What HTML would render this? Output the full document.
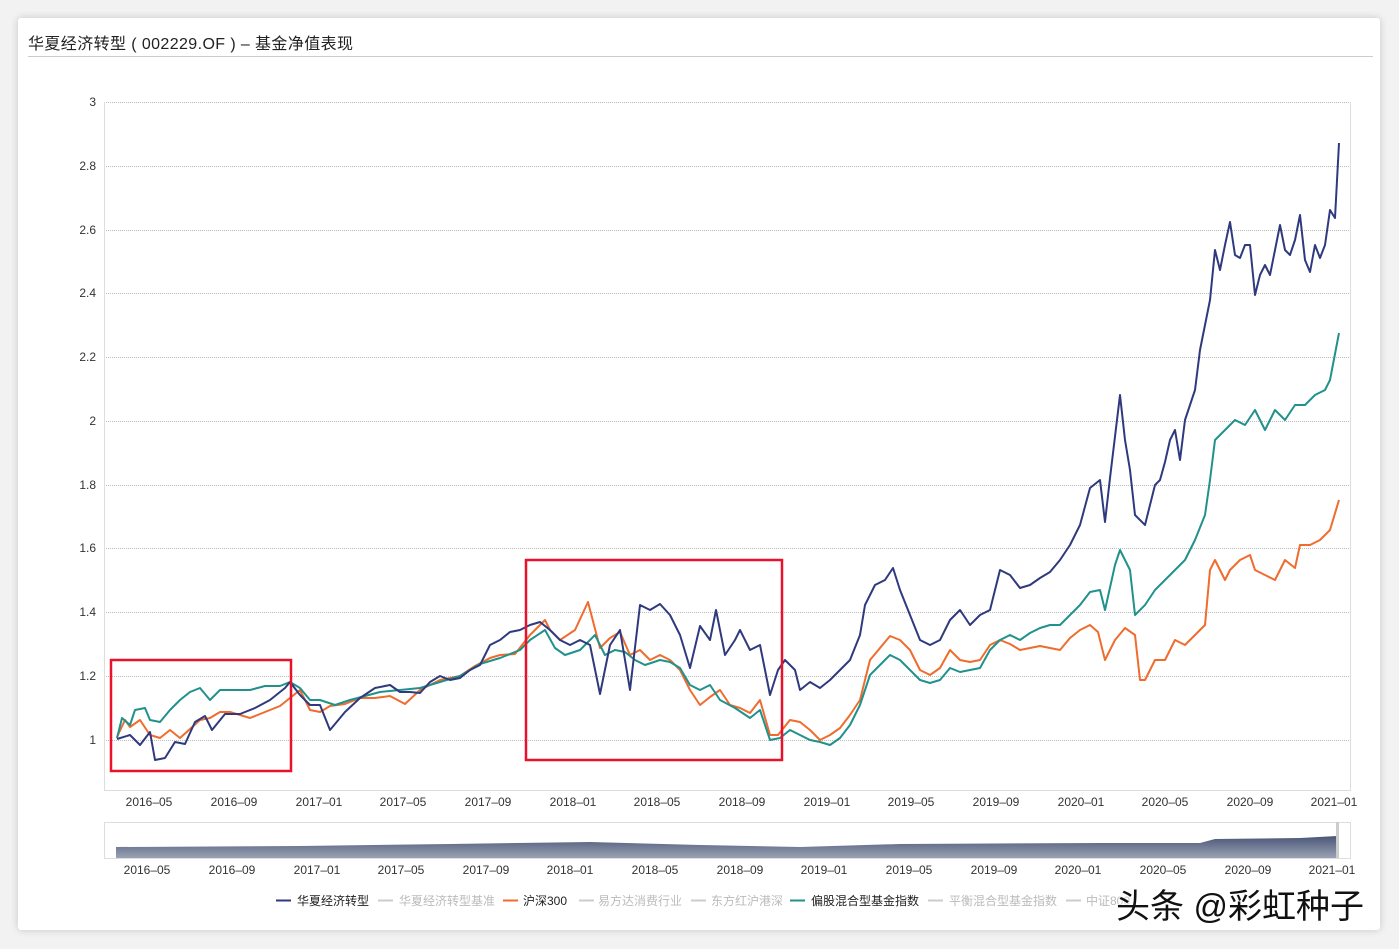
<!DOCTYPE html>
<html><head><meta charset="utf-8"><style>
html,body{margin:0;padding:0;width:1399px;height:949px;background:#f2f2f2;overflow:hidden;font-family:"Liberation Sans","Noto Sans CJK SC",sans-serif}
.card{position:absolute;left:18px;top:18px;width:1362px;height:912px;background:#fff;box-shadow:0 0 8px rgba(0,0,0,.18);border-radius:3px}
.title{position:absolute;left:28px;top:30px;font-size:16px;letter-spacing:0.4px;color:#222}
.line{position:absolute;left:28px;top:56px;width:1345px;height:1px;background:#ccc}
svg{position:absolute;left:0;top:0}
.wm{position:absolute;left:1116px;top:879px;font-size:34px;color:#111;text-shadow:0 0 3px #fff,0 0 3px #fff}
</style></head><body>
<div class="card"></div>
<div class="title">华夏经济转型 ( 002229.OF ) – 基金净值表现</div>
<div class="line"></div>
<svg width="1399" height="949" font-family="Liberation Sans, Noto Sans CJK SC, sans-serif">
<g stroke="#bbb" stroke-dasharray="1,1" stroke-width="1">
<line x1="104" y1="102.5" x2="1350" y2="102.5"/><line x1="104" y1="166.5" x2="1350" y2="166.5"/>
<line x1="104" y1="230.5" x2="1350" y2="230.5"/><line x1="104" y1="293.5" x2="1350" y2="293.5"/>
<line x1="104" y1="357.5" x2="1350" y2="357.5"/><line x1="104" y1="421.5" x2="1350" y2="421.5"/>
<line x1="104" y1="485.5" x2="1350" y2="485.5"/><line x1="104" y1="548.5" x2="1350" y2="548.5"/>
<line x1="104" y1="612.5" x2="1350" y2="612.5"/><line x1="104" y1="676.5" x2="1350" y2="676.5"/>
<line x1="104" y1="740.5" x2="1350" y2="740.5"/>
</g>
<g stroke="#ddd" fill="none"><line x1="104.5" y1="102" x2="104.5" y2="791"/><line x1="1350.5" y1="102" x2="1350.5" y2="791"/><line x1="104" y1="790.5" x2="1350" y2="790.5"/></g>
<g font-size="12" fill="#333" text-anchor="end">
<text x="96" y="106">3</text><text x="96" y="170">2.8</text><text x="96" y="234">2.6</text><text x="96" y="297">2.4</text><text x="96" y="361">2.2</text><text x="96" y="425">2</text><text x="96" y="489">1.8</text><text x="96" y="552">1.6</text><text x="96" y="616">1.4</text><text x="96" y="680">1.2</text><text x="96" y="744">1</text>
</g>
<g font-size="12" fill="#333" text-anchor="middle">
<text x="149" y="806">2016–05</text><text x="234" y="806">2016–09</text><text x="319" y="806">2017–01</text><text x="403" y="806">2017–05</text><text x="488" y="806">2017–09</text><text x="573" y="806">2018–01</text><text x="657" y="806">2018–05</text><text x="742" y="806">2018–09</text><text x="827" y="806">2019–01</text><text x="911" y="806">2019–05</text><text x="996" y="806">2019–09</text><text x="1081" y="806">2020–01</text><text x="1165" y="806">2020–05</text><text x="1250" y="806">2020–09</text><text x="1334" y="806">2021–01</text>
<text x="147" y="874">2016–05</text><text x="232" y="874">2016–09</text><text x="317" y="874">2017–01</text><text x="401" y="874">2017–05</text><text x="486" y="874">2017–09</text><text x="570" y="874">2018–01</text><text x="655" y="874">2018–05</text><text x="740" y="874">2018–09</text><text x="824" y="874">2019–01</text><text x="909" y="874">2019–05</text><text x="994" y="874">2019–09</text><text x="1078" y="874">2020–01</text><text x="1163" y="874">2020–05</text><text x="1248" y="874">2020–09</text><text x="1332" y="874">2021–01</text>
</g>
<defs><linearGradient id="g" x1="0" y1="0" x2="0" y2="1"><stop offset="0" stop-color="#4a5678"/><stop offset="1" stop-color="#9aa2b4"/></linearGradient></defs>
<rect x="104.5" y="822.5" width="1246" height="36" fill="none" stroke="#ddd"/>
<path d="M116,847 L300,846 L450,844 L590,842 L700,845 L800,847 L900,844 L1100,843 L1200,843 L1215,839 L1300,838 L1337,836 L1337,858 L116,858Z" fill="url(#g)"/>
<rect x="1336" y="822" width="3" height="36" fill="#ccc"/>
<g fill="none" stroke-width="2" stroke-linejoin="round">
<polyline stroke="#ef6c2e" points="117,737 125,720 130,727 140,720 150,735 160,738 170,730 180,738 200,720 210,718 220,712 230,712 240,715 250,718 260,714 270,710 280,706 290,698 300,690 310,710 320,712 330,706 345,704 360,698 375,698 390,696 405,704 420,690 440,680 460,676 475,666 490,658 500,655 515,654 530,635 545,620 550,630 560,640 575,630 588,602 600,648 610,638 620,632 630,655 640,650 650,660 660,655 670,660 680,670 690,690 700,705 710,697 720,690 730,705 740,708 750,713 760,700 770,735 778,735 790,720 800,722 810,730 820,740 830,735 840,728 850,715 860,700 870,660 880,648 890,636 900,640 910,650 920,670 930,675 940,668 950,650 960,660 970,662 980,660 990,645 1000,640 1010,644 1020,650 1030,648 1040,646 1050,648 1060,650 1070,638 1080,630 1090,625 1098,632 1105,660 1115,640 1125,628 1135,635 1140,680 1145,680 1155,660 1165,660 1175,640 1185,645 1195,635 1205,625 1210,570 1215,560 1225,580 1230,570 1240,560 1250,555 1255,570 1265,575 1275,580 1285,560 1295,568 1300,545 1310,545 1320,540 1330,530 1339,500"/>
<polyline stroke="#21918c" points="117,738 122,718 130,725 135,710 145,708 150,720 160,722 170,710 180,700 190,692 200,688 210,700 220,690 235,690 250,690 265,686 280,686 290,682 300,688 310,700 320,700 335,705 350,700 365,696 380,692 400,690 420,688 440,682 460,676 480,664 500,658 520,650 530,640 545,630 555,648 565,655 580,650 595,635 605,655 615,650 625,652 635,660 645,665 660,660 670,662 680,668 690,685 700,690 710,685 720,700 735,708 750,718 760,710 770,740 780,738 790,730 800,735 810,740 820,742 830,745 840,738 850,725 860,705 870,675 880,665 890,655 900,660 910,670 920,680 930,683 940,680 950,668 960,672 970,670 980,668 990,650 1000,640 1010,635 1020,640 1030,633 1040,628 1050,625 1060,625 1070,615 1080,605 1090,592 1100,590 1105,610 1115,565 1120,550 1130,570 1135,615 1145,605 1155,590 1165,580 1175,570 1185,560 1195,540 1205,515 1210,480 1215,440 1225,430 1235,420 1245,425 1255,410 1265,430 1275,410 1285,420 1295,405 1305,405 1315,395 1325,390 1330,380 1339,333"/>
<polyline stroke="#2f3a7e" points="117,739 130,735 140,745 150,732 155,760 165,758 175,742 185,744 195,722 205,716 212,730 225,714 240,714 255,708 270,700 285,688 290,682 300,695 310,705 320,705 330,730 345,712 360,698 375,688 390,685 400,692 410,692 420,693 430,682 440,676 450,680 460,678 470,670 480,665 490,645 500,640 510,632 520,630 530,625 540,622 550,630 560,640 570,645 580,640 590,645 600,694 610,645 620,630 630,690 640,605 650,610 660,604 670,615 680,635 690,668 700,626 710,640 716,610 725,655 735,640 740,630 750,650 760,645 770,695 778,670 785,660 795,670 800,690 810,682 820,688 830,680 840,670 850,660 860,635 865,605 875,585 885,580 893,568 900,590 910,615 920,640 930,645 940,640 950,620 960,610 970,625 980,615 990,610 1000,570 1010,575 1020,588 1030,585 1040,578 1050,572 1060,560 1070,545 1080,525 1090,488 1100,480 1105,522 1110,478 1120,395 1125,440 1130,470 1135,515 1145,525 1155,485 1160,480 1165,462 1170,440 1175,430 1180,460 1185,420 1195,390 1200,350 1210,300 1215,250 1220,270 1225,245 1230,222 1235,255 1240,258 1245,245 1250,245 1255,295 1260,275 1265,265 1270,275 1280,225 1285,250 1290,255 1295,240 1300,215 1305,260 1310,272 1315,245 1320,258 1325,245 1330,210 1335,218 1339,143"/>
</g>
<g fill="none" stroke="#e8122a" stroke-width="2.5">
<rect x="111" y="660" width="180" height="111"/>
<rect x="526" y="560" width="256" height="200"/>
</g>
<g font-size="12">
<line x1="276" y1="900.5" x2="291" y2="900.5" stroke="#2f3a7e" stroke-width="2"/><text x="297" y="905" fill="#222">华夏经济转型</text>
<line x1="378" y1="900.5" x2="393" y2="900.5" stroke="#ccc" stroke-width="2"/><text x="399" y="905" fill="#bbb">华夏经济转型基准</text>
<line x1="503" y1="900.5" x2="518" y2="900.5" stroke="#ef6c2e" stroke-width="2"/><text x="523" y="905" fill="#222">沪深300</text>
<line x1="579" y1="900.5" x2="594" y2="900.5" stroke="#ccc" stroke-width="2"/><text x="598" y="905" fill="#bbb">易方达消费行业</text>
<line x1="691" y1="900.5" x2="706" y2="900.5" stroke="#ccc" stroke-width="2"/><text x="711" y="905" fill="#bbb">东方红沪港深</text>
<line x1="790" y1="900.5" x2="805" y2="900.5" stroke="#21918c" stroke-width="2"/><text x="811" y="905" fill="#222">偏股混合型基金指数</text>
<line x1="928" y1="900.5" x2="943" y2="900.5" stroke="#ccc" stroke-width="2"/><text x="949" y="905" fill="#bbb">平衡混合型基金指数</text>
<line x1="1066" y1="900.5" x2="1081" y2="900.5" stroke="#ccc" stroke-width="2"/><text x="1086" y="905" fill="#bbb">中证800</text>
</g>
</svg>
<div class="wm">头条 @彩虹种子</div>
</body></html>
